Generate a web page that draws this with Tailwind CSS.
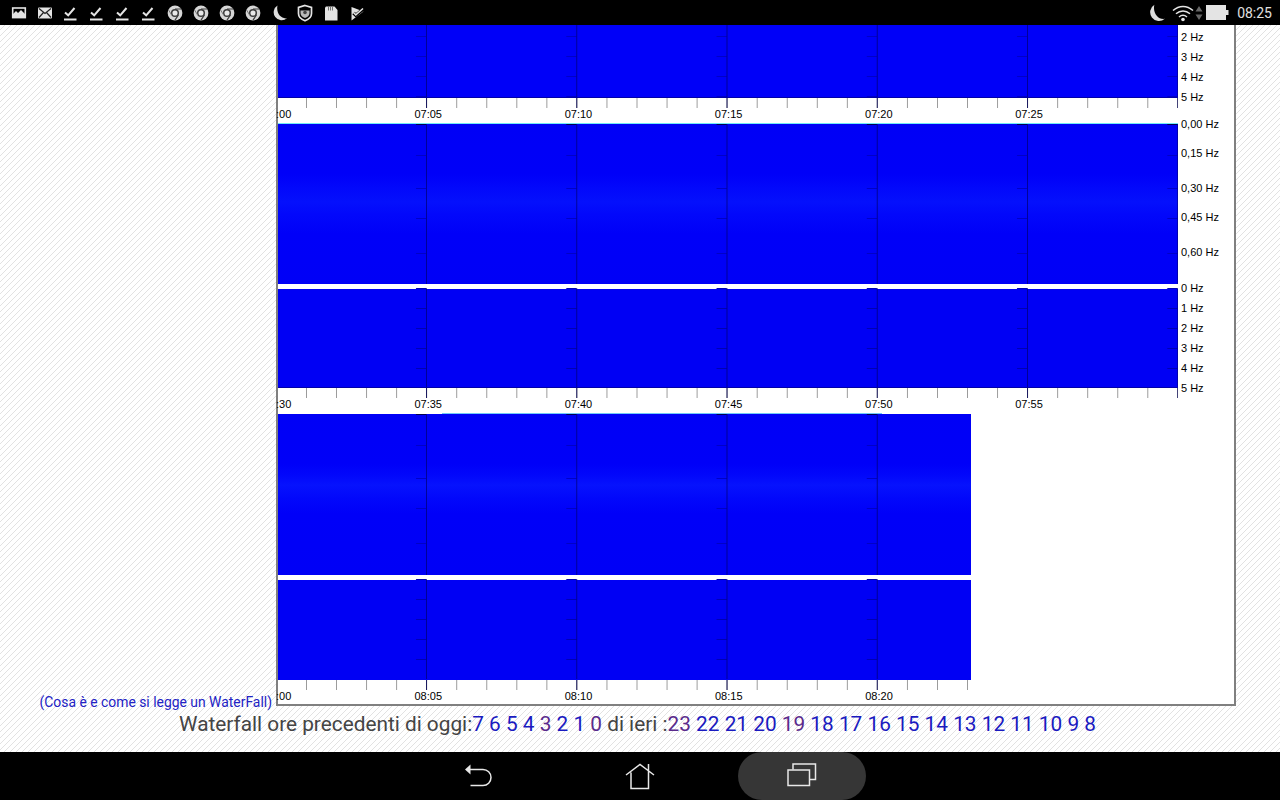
<!DOCTYPE html>
<html lang="en">
<head>
    <meta charset="UTF-8">
    <meta name="viewport" content="width=device-width, initial-scale=1.0">
    <title>Waterfall</title>
    <script src="https://cdn.jsdelivr.net/npm/@tailwindcss/browser@4"></script>
</head>
<body class="h-screen overflow-hidden flex flex-col font-['Roboto',sans-serif] bg-white bg-[linear-gradient(135deg,#e2e2e2_8%,#ffffff_8%,#ffffff_50%,#e2e2e2_50%,#e2e2e2_58%,#ffffff_58%)] bg-[size:6px_6px]">

    <!-- shared icons and plot overlays -->
    <svg width="0" height="0" class="absolute">
        <defs>
            <symbol id="i-check" viewBox="0 0 20 20"><path d="M4 9.500l3.200 2.800L13.500 5" fill="none" stroke="#e4e4e4" stroke-width="2"/><path d="M3 16.500h12.500" stroke="#e4e4e4" stroke-width="2"/></symbol>
            <symbol id="i-chrome" viewBox="0 0 20 20"><circle cx="10" cy="10" r="7.400" fill="#d6d6d6"/><circle cx="10" cy="10" r="3.300" fill="#e8e8e8" stroke="#3c3c3c" stroke-width="1.500"/><path d="M10 6H16.500M13.400 12L10 17.200" stroke="#3c3c3c" stroke-width="1.200"/><path d="M6.600 12l-3-5" stroke="#777" stroke-width="1"/></symbol>
            <symbol id="i-moon" viewBox="0 0 20 20"><path d="M8.500 2.500A8 8 0 1 0 18 15.300C12 16.300 6.800 10 8.500 2.500z" fill="#dedede"/></symbol>
            <pattern id="p-lines" x="148" y="0" width="150.25" height="20" patternUnits="userSpaceOnUse"><rect width="1" height="20" fill="#000070" fill-opacity="0.7"/></pattern>
            <pattern id="p-top" x="148" y="11" width="150.25" height="20" patternUnits="userSpaceOnUse"><rect width="1" height="20" fill="#000070" fill-opacity="0.7"/><rect x="140.25" width="10" height="1" fill="#0000c8"/></pattern>
            <pattern id="p-hz" x="148" y="0" width="150.25" height="161" patternUnits="userSpaceOnUse"><rect width="1" height="161" fill="#000070" fill-opacity="0.7"/><rect x="140.25" width="10" height="1" fill="#000050"/><rect x="140.25" y="31" width="10" height="1" fill="#0000c8"/><rect x="140.25" y="64" width="10" height="1" fill="#0000c8"/><rect x="140.25" y="94" width="10" height="1" fill="#0000c8"/><rect x="140.25" y="129" width="10" height="1" fill="#0000c8"/></pattern>
            <pattern id="p-ticks" x="148" y="0" width="150.25" height="20" patternUnits="userSpaceOnUse"><rect width="1" height="20" fill="#000070" fill-opacity="0.7"/><rect x="140.25" width="10" height="1" fill="#0000b4"/></pattern>
        </defs>
    </svg>

    <!-- status bar -->
    <header class="h-[25px] shrink-0 bg-black flex items-center pl-[6px] pr-[8px] text-[#e0e0e0]">
        <div class="flex">
            <span class="w-[26px] h-[25px] flex items-center justify-center"><svg width="20" height="20" viewBox="0 0 20 20"><rect x="3.700" y="5" width="12.600" height="9.600" fill="none" stroke="#e4e4e4" stroke-width="1.600"/><path d="M4 14v-3l3-3 2 2 3-3 4 4v3z" fill="#e4e4e4"/></svg></span>
            <span class="w-[26px] h-[25px] flex items-center justify-center"><svg width="20" height="20" viewBox="0 0 20 20"><rect x="3" y="4.500" width="14" height="11" rx="1" fill="#e4e4e4"/><path d="M4 5.500l6 5 6-5M4 14.500l4.500-5M16 14.500l-4.500-5" fill="none" stroke="#222" stroke-width="1.200"/></svg></span>
            <span class="w-[26px] h-[25px] flex items-center justify-center"><svg width="20" height="20"><use href="#i-check"/></svg></span>
            <span class="w-[26px] h-[25px] flex items-center justify-center"><svg width="20" height="20"><use href="#i-check"/></svg></span>
            <span class="w-[26px] h-[25px] flex items-center justify-center"><svg width="20" height="20"><use href="#i-check"/></svg></span>
            <span class="w-[26px] h-[25px] flex items-center justify-center"><svg width="20" height="20"><use href="#i-check"/></svg></span>
            <span class="w-[26px] h-[25px] flex items-center justify-center"><svg width="20" height="20"><use href="#i-chrome"/></svg></span>
            <span class="w-[26px] h-[25px] flex items-center justify-center"><svg width="20" height="20"><use href="#i-chrome"/></svg></span>
            <span class="w-[26px] h-[25px] flex items-center justify-center"><svg width="20" height="20"><use href="#i-chrome"/></svg></span>
            <span class="w-[26px] h-[25px] flex items-center justify-center"><svg width="20" height="20"><use href="#i-chrome"/></svg></span>
            <span class="w-[26px] h-[25px] flex items-center justify-center"><svg width="20" height="20"><use href="#i-moon"/></svg></span>
            <span class="w-[26px] h-[25px] flex items-center justify-center"><svg width="20" height="20" viewBox="0 0 20 20"><path d="M10 2.500l6.500 2v6c0 3.600-3 6-6.500 7.300-3.500-1.300-6.500-3.700-6.500-7.300v-6z" fill="none" stroke="#e4e4e4" stroke-width="1.700"/><path d="M5.500 7.500h9v2.500c0 2.500-2 4.300-4.500 5-2.500-.7-4.500-2.500-4.500-5z" fill="#b8b8b8"/><circle cx="10" cy="9.500" r="1.800" fill="#444"/></svg></span>
            <span class="w-[26px] h-[25px] flex items-center justify-center"><svg width="20" height="20" viewBox="0 0 20 20"><path d="M5 3.500h8.500l3 3.500v10.500H4V4.500z" fill="#e4e4e4"/><path d="M7.500 4v3.500M9.500 4v3.500M11.500 4v3.500" stroke="#666" stroke-width="0.900"/></svg></span>
            <span class="w-[26px] h-[25px] flex items-center justify-center"><svg width="20" height="20" viewBox="0 0 20 20"><path d="M4.500 4l12 4.500-12 9z" fill="#e4e4e4"/><path d="M6.500 10l2.300 2.300L17 5.500" fill="none" stroke="#000" stroke-width="3.400"/><path d="M6.500 9.500l2.300 2.300L16 5.500" fill="none" stroke="#e4e4e4" stroke-width="1.600"/></svg></span>
        </div>
        <div class="ml-auto flex items-center">
            <svg width="22" height="22"><use href="#i-moon"/></svg>
            <svg class="ml-[5px]" width="22" height="18" viewBox="0 0 22 18"><path d="M1 6.500C7 1 15 1 21 6.500M4 9.800c4.200-3.800 9.800-3.800 14 0M7 13c2.400-2 5.600-2 8 0" fill="none" stroke="#e4e4e4" stroke-width="1.500"/><circle cx="11" cy="15.500" r="1.800" fill="#e4e4e4"/></svg>
            <svg class="ml-[1px]" width="8" height="16" viewBox="0 0 8 16"><path d="M4 1l3.500 5.500h-7zM4 15l3.500-5.500h-7z" fill="#666"/></svg>
            <svg class="ml-[3px]" width="23" height="15" viewBox="0 0 23 15"><path d="M0 0h20v5h2.500v5H20v5H0z" fill="#e4e4e4"/></svg>
            <span class="ml-[8px] text-[14px] leading-none">08:25</span>
        </div>
    </header>

    <!-- page -->
    <main class="h-[685px] shrink-0 flex items-start">
        <div class="w-[276px] h-full flex flex-col justify-end items-end pr-[4px]">
            <a href="#" class="text-[13.9px] leading-[16px] text-[#2222c4]">(Cosa è e come si legge un WaterFall)</a>
        </div>

        <div class="w-[960px] h-[681px] bg-white border-x-2 border-b-2 border-[#808080] font-['Liberation_Sans',sans-serif] text-[11px] text-black">

            <!-- 07:00 -->
            <section class="flex">
                <div class="w-[900px]">
                    <div class="relative h-[73px] bg-[#0000f8] border-b border-[#0000a8]">
                        <svg class="absolute inset-0" width="900" height="73"><rect width="900" height="72" fill="url(#p-top)"/></svg>
                    </div>
                    <div class="h-[25px]">
                        <div class="h-[10px] bg-[linear-gradient(90deg,#999999_1px,transparent_1px)] bg-[size:30.05px_10px] bg-[position:28px_0]">
                            <div class="h-full bg-[linear-gradient(90deg,#1a1a60_1px,transparent_1px)] bg-[size:150.25px_10px] bg-[position:148px_0]"></div>
                        </div>
                        <div class="flex leading-[12px]">
                            <span class="w-[150.25px]"><span class="inline-block -ml-[2px]">:00</span></span>
                            <span class="w-[150.25px]"><span class="inline-block -translate-x-1/2">07:05</span></span>
                            <span class="w-[150.25px]"><span class="inline-block -translate-x-1/2">07:10</span></span>
                            <span class="w-[150.25px]"><span class="inline-block -translate-x-1/2">07:15</span></span>
                            <span class="w-[150.25px]"><span class="inline-block -translate-x-1/2">07:20</span></span>
                            <span class="w-[149px]"><span class="inline-block -translate-x-1/2">07:25</span></span>
                        </div>
                    </div>
                </div>
                <div class="pl-[3px] pt-[2px] leading-[20px]">
                    <div>2 Hz</div>
                    <div>3 Hz</div>
                    <div>4 Hz</div>
                    <div>5 Hz</div>
                </div>
            </section>

            <!-- 07:30 -->
            <section class="flex">
                <div class="w-[900px]">
                    <div class="relative h-[161px] border-t border-[#70e8f8] bg-[linear-gradient(180deg,#0000f6_0,#0000f8_50px,#0208fb_64px,#0410fc_78px,#0208fb_90px,#0000f8_110px,#0000f6_160px)]">
                        <svg class="absolute inset-0" width="900" height="160"><rect width="900" height="160" fill="url(#p-hz)"/></svg>
                    </div>
                    <div class="relative h-[99px] mt-[5px] bg-[#0000f4] border-b border-[#0000a8]">
                        <svg class="absolute -top-px left-0" width="900" height="99"><rect width="900" height="99" fill="url(#p-ticks)"/></svg>
                    </div>
                    <div class="h-[26px]">
                        <div class="h-[10px] bg-[linear-gradient(90deg,#999999_1px,transparent_1px)] bg-[size:30.05px_10px] bg-[position:28px_0]">
                            <div class="h-full bg-[linear-gradient(90deg,#1a1a60_1px,transparent_1px)] bg-[size:150.25px_10px] bg-[position:148px_0]"></div>
                        </div>
                        <div class="flex leading-[12px]">
                            <span class="w-[150.25px]"><span class="inline-block -ml-[2px]">:30</span></span>
                            <span class="w-[150.25px]"><span class="inline-block -translate-x-1/2">07:35</span></span>
                            <span class="w-[150.25px]"><span class="inline-block -translate-x-1/2">07:40</span></span>
                            <span class="w-[150.25px]"><span class="inline-block -translate-x-1/2">07:45</span></span>
                            <span class="w-[150.25px]"><span class="inline-block -translate-x-1/2">07:50</span></span>
                            <span class="w-[149px]"><span class="inline-block -translate-x-1/2">07:55</span></span>
                        </div>
                    </div>
                </div>
                <div class="pl-[3px] -mt-[9px] leading-[20px]">
                    <div class="mb-[9px]">0,00 Hz</div>
                    <div class="mb-[15px]">0,15 Hz</div>
                    <div class="mb-[9px]">0,30 Hz</div>
                    <div class="mb-[15px]">0,45 Hz</div>
                    <div class="mb-[16px]">0,60 Hz</div>
                    <div>0 Hz</div>
                    <div>1 Hz</div>
                    <div>2 Hz</div>
                    <div>3 Hz</div>
                    <div>4 Hz</div>
                    <div>5 Hz</div>
                </div>
            </section>

            <!-- 08:00 -->
            <section class="w-[693px]">
                <div class="relative h-[161px] bg-[linear-gradient(180deg,#0000f6_0,#0000f8_50px,#0208fb_62px,#0612fd_71px,#0208fb_84px,#0000f8_100px,#0000f6_160px)]">
                    <span class="absolute -top-px left-[164px] w-[440px] h-[1px] bg-[#70c8f8]"></span>
                    <svg class="absolute inset-0" width="693" height="161"><rect width="693" height="161" fill="url(#p-hz)"/></svg>
                </div>
                <div class="relative h-[100px] mt-[5px] bg-[#0000f4]">
                    <svg class="absolute -top-px left-0" width="693" height="100"><rect width="693" height="100" fill="url(#p-ticks)"/></svg>
                </div>
                <div class="h-[24px]">
                    <div class="h-[10px] bg-[linear-gradient(90deg,#999999_1px,transparent_1px)] bg-[size:30.05px_10px] bg-[position:28px_0]">
                        <div class="h-full bg-[linear-gradient(90deg,#1a1a60_1px,transparent_1px)] bg-[size:150.25px_10px] bg-[position:148px_0]"></div>
                    </div>
                    <div class="flex leading-[12px]">
                        <span class="w-[150.25px]"><span class="inline-block -ml-[2px]">:00</span></span>
                        <span class="w-[150.25px]"><span class="inline-block -translate-x-1/2">08:05</span></span>
                        <span class="w-[150.25px]"><span class="inline-block -translate-x-1/2">08:10</span></span>
                        <span class="w-[150.25px]"><span class="inline-block -translate-x-1/2">08:15</span></span>
                        <span class="w-[90px]"><span class="inline-block -translate-x-1/2">08:20</span></span>
                    </div>
                </div>
            </section>
        </div>
    </main>

    <!-- hours -->
    <p class="h-[42px] shrink-0 text-center text-[20.8px] leading-[28px] text-[#444444] pr-[5px]">
        Waterfall ore precedenti di oggi:<a href="#" class="text-[#1a1ac0]">7</a> <a href="#" class="text-[#1a1ac0]">6</a> <a href="#" class="text-[#1a1ac0]">5</a> <a href="#" class="text-[#1a1ac0]">4</a> <a href="#" class="text-[#5a2a8c]">3</a> <a href="#" class="text-[#1a1ac0]">2</a> <a href="#" class="text-[#1a1ac0]">1</a> <a href="#" class="text-[#5a2a8c]">0</a> di ieri :<a href="#" class="text-[#5a2a8c]">23</a> <a href="#" class="text-[#1a1ac0]">22</a> <a href="#" class="text-[#1a1ac0]">21</a> <a href="#" class="text-[#1a1ac0]">20</a> <a href="#" class="text-[#5a2a8c]">19</a> <a href="#" class="text-[#1a1ac0]">18</a> <a href="#" class="text-[#1a1ac0]">17</a> <a href="#" class="text-[#1a1ac0]">16</a> <a href="#" class="text-[#1a1ac0]">15</a> <a href="#" class="text-[#1a1ac0]">14</a> <a href="#" class="text-[#1a1ac0]">13</a> <a href="#" class="text-[#1a1ac0]">12</a> <a href="#" class="text-[#1a1ac0]">11</a> <a href="#" class="text-[#1a1ac0]">10</a> <a href="#" class="text-[#1a1ac0]">9</a> <a href="#" class="text-[#1a1ac0]">8</a>
    </p>

    <!-- navigation bar -->
    <nav class="h-[48px] shrink-0 bg-black flex justify-center gap-[34px]">
        <button class="w-[128px] flex items-center justify-center">
            <svg width="30" height="26" viewBox="0 0 30 26"><path d="M7.500 1.500v10l-5.500-5z" fill="#e8e8e8"/><path d="M7 6.500h13a8 8 0 0 1 0 16H7.500" fill="none" stroke="#e8e8e8" stroke-width="1.500"/></svg>
        </button>
        <button class="w-[128px] flex items-center justify-center">
            <svg width="32" height="28" viewBox="0 0 32 28"><path d="M2 13L16 2.500 30 13M7 10.500V26.500H24.500V10.500M24.500 2v9" fill="none" stroke="#e8e8e8" stroke-width="1.500"/></svg>
        </button>
        <button class="w-[128px] rounded-full bg-[#363636] flex items-center justify-center">
            <svg width="30" height="26" viewBox="0 0 30 26"><rect x="1" y="7" width="21.500" height="15.500" fill="none" stroke="#e8e8e8" stroke-width="1.500"/><path d="M6 6.500V1h22.500v15.500H23" fill="none" stroke="#e8e8e8" stroke-width="1.500"/></svg>
        </button>
    </nav>
</body>
</html>
